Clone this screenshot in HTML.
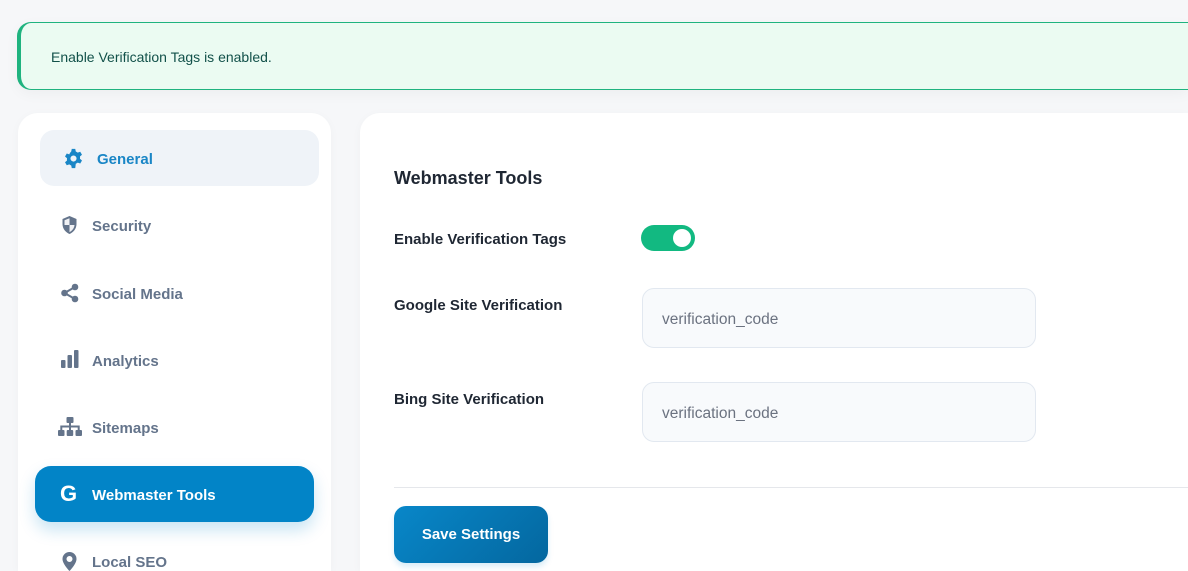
<!DOCTYPE html>
<html style="width:1188px;height:571px;overflow:hidden"><head><meta charset="utf-8"><style>
*{box-sizing:border-box;margin:0;padding:0}
body{width:1188px;height:571px;overflow:hidden;background:#f6f7f9;font-family:"Liberation Sans",sans-serif;position:relative}
.alert{position:absolute;left:17px;top:22px;width:1171px;height:68px;background:#ebfbf2;border:1.5px solid #1fb37f;border-left:4px solid #1fb37f;border-right:none;border-radius:14px 0 0 14px;color:#12514a;font-size:14px;padding-left:30px;line-height:68px;box-shadow:0 4px 14px rgba(0,0,0,.04)}
.side{position:absolute;left:18px;top:113px;width:313px;height:458px;background:#fff;border-radius:20px 20px 0 0;box-shadow:0 2px 10px rgba(0,0,0,.03)}
.main{position:absolute;left:360px;top:113px;width:828px;height:458px;background:#fff;border-radius:20px 0 0 0;box-shadow:0 2px 10px rgba(0,0,0,.03)}
.lbl{position:absolute;left:394px;font-size:15px;font-weight:bold;color:#1f2733}
.inp{position:absolute;left:642px;width:394px;height:60px;background:#f8fafc;border:1px solid #e2e8f0;border-radius:12px;color:#6b7280;font-size:15.5px;padding-left:19px;line-height:61px}
</style></head><body>
<div class="alert">Enable Verification Tags is enabled.</div>
<div class="side"></div>
<div class="main"></div>

<div style="position:absolute;left:40px;top:130px;width:279px;height:56px;background:#eff3f8;border-radius:14px"></div>
<svg style="position:absolute;left:63px;top:148px" width="21" height="21" viewBox="0 0 24 24"><path fill="#1a86c6" d="M10 1h4l.6 3a8 8 0 0 1 2.2 1.3l2.9-1 2 3.4-2.3 2a8 8 0 0 1 0 2.6l2.3 2-2 3.4-2.9-1a8 8 0 0 1-2.2 1.3L14 23h-4l-.6-3a8 8 0 0 1-2.2-1.3l-2.9 1-2-3.4 2.3-2a8 8 0 0 1 0-2.6l-2.3-2 2-3.4 2.9 1A8 8 0 0 1 9.4 4zM12 8.5a3.5 3.5 0 1 0 0 7 3.5 3.5 0 0 0 0-7z"/></svg>
<div style="position:absolute;left:97px;top:151px;font-size:15px;font-weight:bold;color:#1a86c6">General</div>

<svg style="position:absolute;left:61px;top:216px" width="17" height="18" viewBox="0 0 16 18"><path fill="#64748b" d="M8 0 15 3v5c0 5-3.5 8.5-7 10C4.5 16.5 1 13 1 8V3z"/><path fill="#fff" d="M8 2.2V9H13c-.3 3.5-2.6 5.9-5 7.1V9H3V4.3z" opacity=".9"/></svg>
<div style="position:absolute;left:92px;top:218px;font-size:15px;font-weight:bold;color:#64748b">Security</div>

<svg style="position:absolute;left:60px;top:283px" width="20" height="20" viewBox="0 0 20 20"><g fill="#64748b"><circle cx="15" cy="4" r="3.3"/><circle cx="4.5" cy="10" r="3.3"/><circle cx="15" cy="16" r="3.3"/></g><path d="M15 4 4.5 10 15 16" stroke="#64748b" stroke-width="2" fill="none"/></svg>
<div style="position:absolute;left:92px;top:286px;font-size:15px;font-weight:bold;color:#64748b">Social Media</div>

<svg style="position:absolute;left:60px;top:350px" width="20" height="19" viewBox="0 0 20 19"><g fill="#64748b"><rect x="1" y="10" width="4.5" height="8" rx="1"/><rect x="7.5" y="5" width="4.5" height="13" rx="1"/><rect x="14" y="0" width="4.5" height="18" rx="1"/></g></svg>
<div style="position:absolute;left:92px;top:353px;font-size:15px;font-weight:bold;color:#64748b">Analytics</div>

<svg style="position:absolute;left:58px;top:417px" width="24" height="20" viewBox="0 0 24 20"><g fill="#64748b"><rect x="8.5" y="0" width="7" height="6" rx="1"/><rect x="0" y="13" width="6.5" height="6" rx="1"/><rect x="8.7" y="13" width="6.5" height="6" rx="1"/><rect x="17.5" y="13" width="6.5" height="6" rx="1"/></g><path d="M12 6v7M3.3 13v-3.5h17.4V13" stroke="#64748b" stroke-width="2" fill="none"/></svg>
<div style="position:absolute;left:92px;top:420px;font-size:15px;font-weight:bold;color:#64748b">Sitemaps</div>

<div style="position:absolute;left:35px;top:466px;width:279px;height:56px;background:#0284c7;border-radius:16px;box-shadow:0 8px 16px rgba(2,132,199,.22)"></div>
<div style="position:absolute;left:60px;top:483px;font-size:22px;font-weight:bold;color:#fff;line-height:22px">G</div>
<div style="position:absolute;left:92px;top:487px;font-size:15px;font-weight:bold;color:#fff">Webmaster Tools</div>

<svg style="position:absolute;left:62px;top:552px" width="15" height="19" viewBox="0 0 15 19"><path fill="#64748b" d="M7.5 0A7 7 0 0 0 .5 7c0 5 7 12 7 12s7-7 7-12a7 7 0 0 0-7-7zm0 4a3 3 0 1 1 0 6 3 3 0 0 1 0-6z"/></svg>
<div style="position:absolute;left:92px;top:555px;font-size:15px;font-weight:bold;color:#64748b;line-height:16px;height:16px;overflow:hidden">Local SEO</div>

<div style="position:absolute;left:394px;top:168px;font-size:18px;font-weight:bold;color:#1f2733">Webmaster Tools</div>
<div class="lbl" style="top:231px">Enable Verification Tags</div>
<div style="position:absolute;left:641px;top:225px;width:54px;height:26px;background:#12b981;border-radius:13px"><div style="position:absolute;right:4px;top:4px;width:18px;height:18px;border-radius:50%;background:#fff"></div></div>
<div class="lbl" style="top:297px">Google Site Verification</div>
<div class="inp" style="top:288px">verification_code</div>
<div class="lbl" style="top:391px">Bing Site Verification</div>
<div class="inp" style="top:382px">verification_code</div>
<div style="position:absolute;left:394px;top:487px;width:794px;height:1px;background:#e5e7eb"></div>
<div style="position:absolute;left:394px;top:506px;width:154px;height:57px;border-radius:12px;background:linear-gradient(135deg,#0887c9,#04679f);color:#fff;font-size:15px;font-weight:bold;text-align:center;line-height:58px;box-shadow:0 4px 6px rgba(2,132,199,.15)">Save Settings</div>
</body></html>
